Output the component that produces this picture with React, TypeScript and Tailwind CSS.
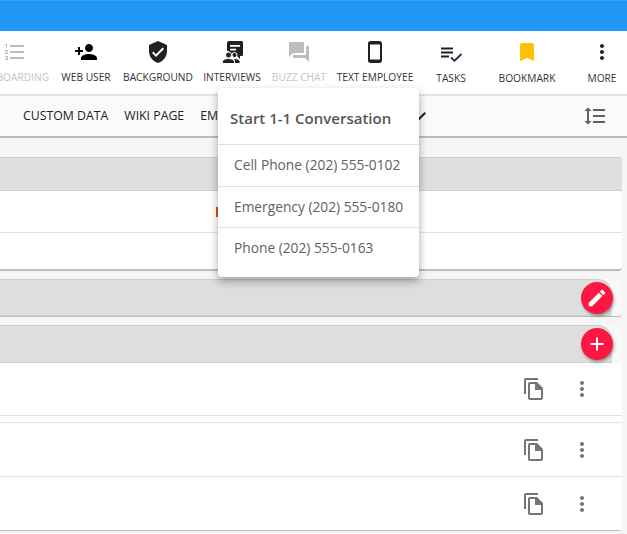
import type { ReactNode } from "react";

const font = "font-['Open_Sans',sans-serif]";

const paths = {
    personAdd:
        "M15 12c2.21 0 4-1.79 4-4s-1.79-4-4-4-4 1.79-4 4 1.79 4 4 4zm-9-2V7H4v3H1v2h3v3h2v-3h3v-2H6zm9 4c-2.67 0-8 1.34-8 4v2h16v-2c0-2.66-5.33-4-8-4z",
    shield: "M12 1L3 5v6c0 5.55 3.84 10.74 9 12 5.16-1.26 9-6.45 9-12V5l-9-4zm-2 16l-4-4 1.41-1.41L10 14.17l6.59-6.59L18 9l-8 8z",
    chat: "M21 6h-2v9H6v2c0 .55.45 1 1 1h11l4 4V7c0-.55-.45-1-1-1zm-4 6V3c0-.55-.45-1-1-1H3c-.55 0-1 .45-1 1v14l4-4h10c.55 0 1-.45 1-1z",
    phone: "M16.5 1h-9C6.1 1 5 2.1 5 3.5v17C5 21.9 6.1 23 7.5 23h9c1.4 0 2.5-1.1 2.5-2.5v-17C19 2.1 17.9 1 16.5 1zM17 19.5H7v-15h10v15z",
    bookmark: "M17 3H7c-1.1 0-2 .9-2 2v16l7-3 7 3V5c0-1.1-.9-2-2-2z",
    more: "M12 8c1.1 0 2-.9 2-2s-.9-2-2-2-2 .9-2 2 .9 2 2 2zm0 2c-1.1 0-2 .9-2 2s.9 2 2 2 2-.9 2-2-.9-2-2-2zm0 6c-1.1 0-2 .9-2 2s.9 2 2 2 2-.9 2-2-.9-2-2-2z",
    spacing: "M6 7h2.5L5 3.5 1.5 7H4v10H1.5L5 20.5 8.5 17H6V7zm4-2v2h12V5H10zm0 14h12v-2H10v2zm0-6h12v-2H10v2z",
    numbered: "M2 17h2v.5H3v1h1v.5H2v1h3v-4H2v1zm1-9h1V4H2v1h1v3zm-1 3h1.8L2 13.1v.9h3v-1H3.2L5 10.9V10H2v1zm5-6v2h14V5H7zm0 14h14v-2H7v2zm0-6h14v-2H7v2z",
    copy: "M16 1H4c-1.1 0-2 .9-2 2v14h2V3h12V1zm-1 4H8c-1.1 0-1.99.9-1.99 2L6 21c0 1.1.89 2 1.99 2H19c1.1 0 2-.9 2-2V11l-6-6zM8 21V7h5v6h6v8H8z",
    edit: "M3 17.25V21h3.75L17.81 9.94l-3.75-3.75L3 17.25zM20.71 7.04c.39-.39.39-1.02 0-1.41l-2.34-2.34c-.39-.39-1.02-.39-1.41 0l-1.83 1.83 3.75 3.75 1.83-1.83z",
    add: "M19 13h-6v6h-2v-6H5v-2h6V5h2v6h6v2z",
};

function Icon({ d, className }: { d: string; className: string }) {
    return (
        <svg viewBox="0 0 24 24" fill="currentColor" className={className}>
            <path d={d} />
        </svg>
    );
}

function InterviewIcon() {
    return (
        <svg viewBox="0 0 24 24" fill="#212121" className="h-[24px] w-[24px]">
            <path d="M9 1h12.500c1 0 1.500.7 1.500 1.500v12c0 1-.7 1.500-1.500 1.500H20v3l-3-3H9z" />
            <path d="M7 3c0-1.200.8-2 2-2h2v10H7z" />
            <path d="M10 5h10v1.700H10zM10 8.700h6v1.700h-6z" fill="#fff" />
            <g stroke="#fff" strokeWidth="1">
                <circle cx="8.500" cy="15" r="3" />
                <circle cx="14.500" cy="15" r="2.500" />
                <path d="M2.500 23.500v-2c0-1.800 3.500-3 6-3s6 1.200 6 3v2z" />
                <path d="M14.500 23.500v-2c0-1.200-.4-2-1.200-2.600.5-.2 1-.4 1.600-.4 2 0 5.100 1.100 5.100 3v2z" />
            </g>
        </svg>
    );
}

function TasksIcon() {
    return (
        <svg viewBox="0 0 24 24" className="h-[24px] w-[24px]">
            <path d="M2 7.500h12v2H2zM2 11.500h12v2H2zM2 15.500h8v2H2z" fill="#212121" />
            <path d="M12 17.500l3.500 3.200L22.500 14" fill="none" stroke="#1c3144" strokeWidth="1.800" />
        </svg>
    );
}

function ToolItem({
    width,
    label,
    muted,
    low,
    children,
}: {
    width: string;
    label: string;
    muted?: boolean;
    low?: boolean;
    children: ReactNode;
}) {
    return (
        <div className={`flex shrink-0 flex-col items-center ${width}`}>
            <div className="flex h-[24px] items-center justify-center">{children}</div>
            <span
                className={`whitespace-nowrap text-[10.2px] leading-[13px] ${low ? "mt-[8px]" : "mt-[7px]"} ${
                    muted ? "text-[#c4c4c4]" : "text-[#333333]"
                }`}
            >
                {label}
            </span>
        </div>
    );
}

function Row({ height }: { height: string }) {
    return (
        <div className={`flex items-center justify-end border-b border-[#e3e3e3] bg-white ${height}`}>
            <Icon d={paths.copy} className="h-[24px] w-[24px] text-[#757575]" />
            <Icon d={paths.more} className="ml-[24px] mr-[28px] h-[24px] w-[24px] text-[#757575]" />
        </div>
    );
}

function Fab({ d }: { d: string }) {
    return (
        <button className="absolute right-[9px] top-[3px] flex h-[32px] w-[32px] items-center justify-center rounded-full bg-[#ff1744] text-white shadow-[1px_2px_3px_rgba(0,0,0,0.35)]">
            <Icon d={d} className="h-[22px] w-[22px]" />
        </button>
    );
}

export default function App() {
    return (
        <div className={`relative h-[534px] w-[627px] overflow-hidden bg-[#f5f5f5] ${font}`}>
            <div className="h-[31px] border-t border-[#3ea0f5] bg-[#2196f3]" />

            <div className="flex h-[65px] items-start border-b-2 border-[#e4e4e4] bg-white pt-[9px]">
                <div className="ml-[-30px] flex">
                    <ToolItem width="w-[90px]" label="ONBOARDING" muted>
                        <Icon d={paths.numbered} className="h-[24px] w-[24px] text-[#bdbdbd]" />
                    </ToolItem>
                    <ToolItem width="w-[52px]" label="WEB USER">
                        <Icon d={paths.personAdd} className="h-[24px] w-[24px] text-black" />
                    </ToolItem>
                    <ToolItem width="w-[92px]" label="BACKGROUND">
                        <Icon d={paths.shield} className="h-[24px] w-[24px] text-[#212121]" />
                    </ToolItem>
                    <ToolItem width="w-[56px]" label="INTERVIEWS">
                        <InterviewIcon />
                    </ToolItem>
                    <ToolItem width="w-[78px]" label="BUZZ CHAT" muted>
                        <Icon d={paths.chat} className="h-[24px] w-[24px] text-[#bdbdbd]" />
                    </ToolItem>
                    <ToolItem width="w-[74px]" label="TEXT EMPLOYEE">
                        <Icon d={paths.phone} className="h-[24px] w-[24px] text-[#212121]" />
                    </ToolItem>
                    <ToolItem width="w-[78px]" label="TASKS" low>
                        <TasksIcon />
                    </ToolItem>
                    <ToolItem width="w-[74px]" label="BOOKMARK" low>
                        <Icon d={paths.bookmark} className="h-[24px] w-[24px] text-[#ffc107]" />
                    </ToolItem>
                    <ToolItem width="w-[76px]" label="MORE" low>
                        <Icon d={paths.more} className="h-[24px] w-[24px] text-[#212121]" />
                    </ToolItem>
                </div>
            </div>

            <div className="flex h-[42px] items-center border-b-2 border-[#bdbdbd] bg-[#fafafa] pl-[23px] text-[12.3px] text-[#212121]">
                <span>CUSTOM DATA</span>
                <span className="ml-[16px]">WIKI PAGE</span>
                <span className="ml-[16px]">EM</span>
                <svg viewBox="0 0 24 24" className="ml-[195px] h-[14px] w-[14px]">
                    <path d="M3.5 13l5.500 5.500L21 6.500" fill="none" stroke="#212121" strokeWidth="3.500" />
                </svg>
                <Icon d={paths.spacing} className="ml-auto mr-[20px] h-[24px] w-[24px] text-[#616161]" />
            </div>

            <div className="flex flex-col gap-[8px] pr-[5px] pt-[19px]">
                <section className="overflow-hidden rounded-r-[4px] border-b-2 border-[#bdbdbd] bg-white">
                    <div className="h-[34px] border-y border-[#cfcfcf] bg-[#dedede]" />
                    <div className="flex h-[42px] items-center border-b border-[#e3e3e3] pl-[216px]">
                        <div className="h-[10px] w-[2px] bg-[#e65100]" />
                    </div>
                    <div className="h-[36px]" />
                </section>

                <section className="relative rounded-r-[4px] border-b border-[#bdbdbd] bg-[#f8f8f8]">
                    <div className="mr-[10px] h-[37px] rounded-tr-[14px] border-y border-[#cfcfcf] bg-[#dedede]" />
                    <Fab d={paths.edit} />
                </section>

                <section className="relative rounded-r-[4px] border-b border-[#bdbdbd] bg-[#f8f8f8]">
                    <div className="mr-[10px] h-[38px] rounded-tr-[14px] border-y border-[#cfcfcf] bg-[#dedede]" />
                    <Fab d={paths.add} />
                    <Row height="h-[53px]" />
                    <div className="h-[7px] border-b border-[#e3e3e3] bg-white" />
                    <Row height="h-[54px]" />
                    <div className="flex h-[53px] items-center justify-end bg-white">
                        <Icon d={paths.copy} className="h-[24px] w-[24px] text-[#757575]" />
                        <Icon d={paths.more} className="ml-[24px] mr-[28px] h-[24px] w-[24px] text-[#757575]" />
                    </div>
                </section>
            </div>

            <div className="absolute left-[218px] top-[88px] w-[201px] rounded-[4px] bg-white text-[#616161] shadow-[0_4px_8px_rgba(0,0,0,0.35)]">
                <div className="flex h-[57px] items-center border-b border-[#e0e0e0] pl-[12px] pt-[4px] text-[15px] font-semibold text-[#555555]">
                    Start 1-1 Conversation
                </div>
                <div className="flex h-[42px] items-center border-b border-[#e0e0e0] pl-[16px] text-[13.75px]">
                    Cell Phone (202) 555-0102
                </div>
                <div className="flex h-[41px] items-center border-b border-[#e0e0e0] pl-[16px] text-[13.75px]">
                    Emergency (202) 555-0180
                </div>
                <div className="flex h-[49px] items-center pb-[8px] pl-[16px] text-[13.75px]">Phone (202) 555-0163</div>
            </div>
        </div>
    );
}
